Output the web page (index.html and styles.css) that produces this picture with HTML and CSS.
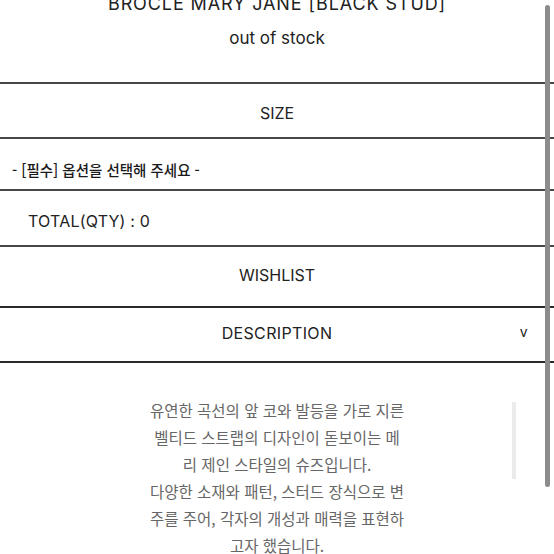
FILE: index.html
```html
<!DOCTYPE html>
<html lang="ko">
<head>
<meta charset="utf-8">
<link rel="stylesheet" href="styles.css">
</head>
<body>
<div class="page">
  <div class="head">
    <div class="title">BROCLE MARY JANE [BLACK STUD]</div>
    <div class="stock">out of stock</div>
  </div>
  <div class="row size">SIZE</div>
  <div class="row select">- [필수] 옵션을 선택해 주세요 -</div>
  <div class="row total">TOTAL(QTY) : 0</div>
  <div class="row wish">WISHLIST</div>
  <div class="row desc"><span>DESCRIPTION</span><span class="caret">v</span></div>
  <div class="content">
    <p class="text">유연한 곡선의 앞 코와 발등을 가로 지른 벨티드 스트랩의 디자인이 돋보이는 메리 제인 스타일의 슈즈입니다.<br>다양한 소재와 패턴, 스터드 장식으로 변주를 주어, 각자의 개성과 매력을 표현하고자 했습니다.</p>
    <div class="inner-bar"></div>
  </div>
  <div class="scrollbar"></div>
</div>
</body>
</html>
```
FILE: styles.css
```css
html, body {
  margin: 0;
  padding: 0;
  background: #fff;
  overflow: hidden;
}
.page {
  position: relative;
  width: 554px;
  height: 554px;
  overflow: hidden;
  font-family: "Inter", "Noto Sans CJK KR", sans-serif;
  color: #222;
}
.head {
  height: 82px;
  display: flex;
  flex-direction: column;
  align-items: center;
}
.title {
  font-size: 18px;
  line-height: 20px;
  margin-top: -6px;
  letter-spacing: 0.9px;
}
.stock {
  font-size: 17px;
  line-height: 20px;
  margin-top: 14px;
}
.row {
  border-top: 2px solid #474747;
  box-sizing: border-box;
  display: flex;
  align-items: center;
  font-size: 16px;
}
.size { height: 55px; justify-content: center; padding-top: 5px; }
.select {
  height: 52px;
  padding-left: 12px;
  font-family: "Noto Sans CJK KR", sans-serif;
  font-size: 14.5px;
  font-weight: 500;
  color: #1a1a1a;
  padding-top: 10px;
}
.total { height: 56px; padding-left: 28px; padding-top: 6px; letter-spacing: 0.2px; }
.wish { height: 61px; justify-content: center; padding-bottom: 4px; }
.desc {
  justify-content: center;
  position: relative;
  border-top-color: #2a2a2a;
  border-bottom: 2px solid #2a2a2a;
  height: 57px;
  padding-bottom: 4px;
  letter-spacing: 0.35px;
}
.caret {
  position: absolute;
  right: 26px;
  font-size: 14px;
  top: 15px;
}
.content {
  position: relative;
  padding-top: 34px;
  display: flex;
  justify-content: center;
}
.text {
  margin: 0;
  width: 255.5px;
  text-align: center;
  font-family: "Noto Sans CJK KR", sans-serif;
  font-size: 15.5px;
  line-height: 27px;
  color: #666;
}
.inner-bar {
  position: absolute;
  left: 512px;
  top: 39px;
  width: 4px;
  height: 77px;
  background: #ebebeb;
}
.scrollbar {
  position: absolute;
  left: 545px;
  top: 5px;
  width: 5px;
  height: 482px;
  border-radius: 3px;
  background: #8c8c8c;
}
```
